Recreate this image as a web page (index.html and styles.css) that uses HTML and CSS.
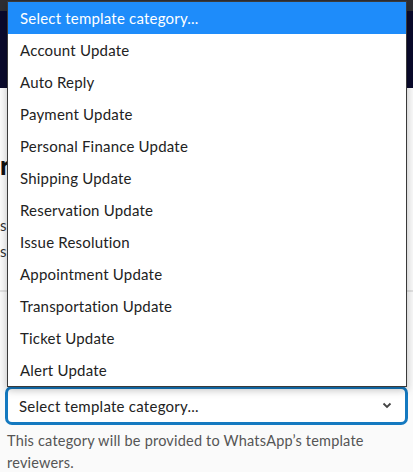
FILE: index.html
```html
<!DOCTYPE html>
<html>
<head>
<meta charset="utf-8">
<link rel="stylesheet" href="styles.css">
</head>
<body>
<div class="page">
  <div class="topbar"></div>
  <div class="header"></div>
  <div class="content">
    <div class="peek-title">r</div>
    <div class="peek-line">s</div>
    <div class="peek-line">s</div>
  </div>
  <div class="divider"></div>
  <div class="form">
    <div class="select">
      <span class="select-text">Select template category...</span>
      <svg class="chev" width="10" height="7" viewBox="0 0 10 7"><path d="M1.5 1.5 L5 5 L8.5 1.5" fill="none" stroke="#444" stroke-width="1.8"/></svg>
    </div>
    <p class="help">This category will be provided to WhatsApp’s template reviewers.</p>
  </div>
  <ul class="menu">
    <li class="item active">Select template category...</li>
    <li class="item">Account Update</li>
    <li class="item">Auto Reply</li>
    <li class="item">Payment Update</li>
    <li class="item">Personal Finance Update</li>
    <li class="item">Shipping Update</li>
    <li class="item">Reservation Update</li>
    <li class="item">Issue Resolution</li>
    <li class="item">Appointment Update</li>
    <li class="item">Transportation Update</li>
    <li class="item">Ticket Update</li>
    <li class="item">Alert Update</li>
  </ul>
</div>
</body>
</html>
```
FILE: styles.css
```css
html, body {
  margin: 0;
  padding: 0;
  background: #fafafa;
  font-family: "Lato", "Open Sans", sans-serif;
}
.page {
  position: relative;
  width: 413px;
  height: 472px;
  overflow: hidden;
}
.topbar {
  height: 11px;
  background: #2e2e33;
}
.header {
  height: 77px;
  background: #0a0a2c;
}
.content {
  height: 202px;
  background: #fbfbfb;
  padding-top: 62px;
  box-sizing: border-box;
}
.peek-title {
  font-size: 26px;
  font-weight: 900;
  color: #111;
  line-height: 30px;
}
.peek-line {
  font-size: 15px;
  color: #333;
  line-height: 26px;
}
.peek-title + .peek-line {
  margin-top: 32px;
}
.divider {
  height: 2px;
  background: #e2e2e2;
}
.form {
  padding-top: 94px;
}
.select {
  margin-left: 5px;
  width: 403px;
  height: 39px;
  box-sizing: border-box;
  border: 3px solid #1479c0;
  border-radius: 7px;
  background: #fff;
  display: flex;
  align-items: center;
  justify-content: space-between;
  padding: 0 13px 0 11px;
}
.select-text {
  font-size: 15px;
  letter-spacing: 0.25px;
  color: #222;
}
.chev {
  display: block;
}
.help {
  margin: 5px 0 0 7px;
  font-size: 14.5px;
  letter-spacing: 0.2px;
  line-height: 22px;
  color: #555;
  width: 395px;
}
.menu {
  position: absolute;
  left: 7px;
  top: 1px;
  width: 400px;
  box-sizing: border-box;
  margin: 0;
  padding: 0;
  list-style: none;
  background: #fff;
  border: 1px solid #3a3a3a;
  box-shadow: 0 3px 8px rgba(0,0,0,0.25);
}
.item {
  height: 32px;
  line-height: 32px;
  padding-left: 12px;
  font-size: 15px;
  letter-spacing: 0.2px;
  color: #222;
}
.item.active {
  background: #1e8cfa;
  color: #fff;
}
```
